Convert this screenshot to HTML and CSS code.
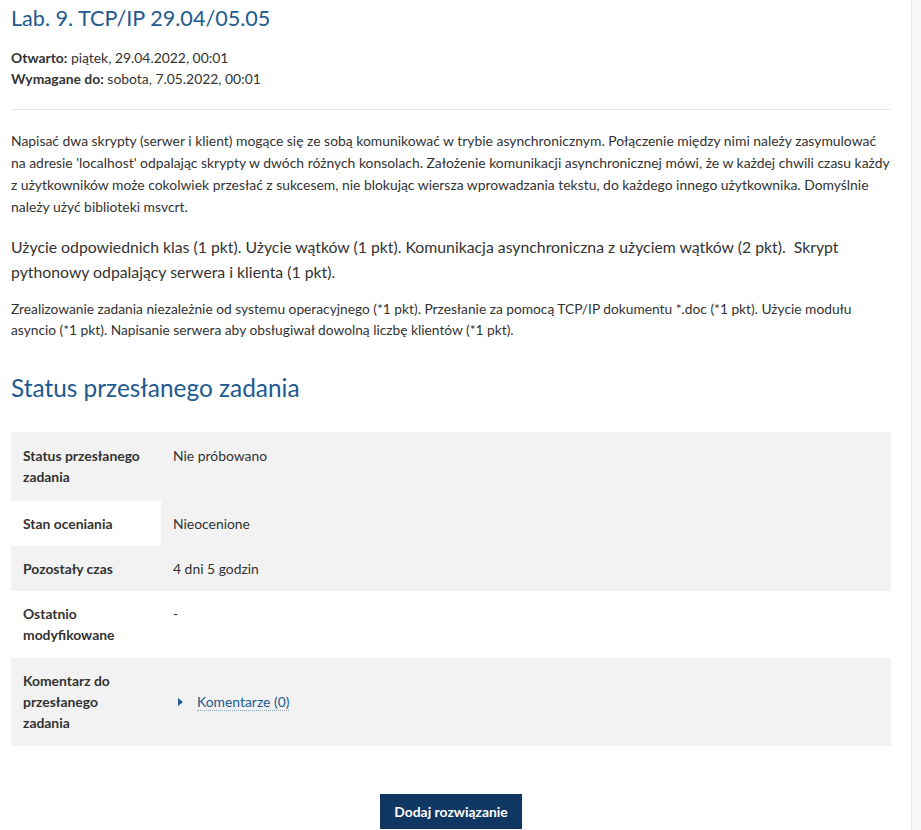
FILE: index.html
```html
<!DOCTYPE html>
<html lang="pl">
<head>
<meta charset="utf-8">
<title>Lab. 9. TCP/IP 29.04/05.05</title>
<link rel="stylesheet" href="styles.css">
</head>
<body>
<div class="layout">
  <main class="main">
    <h1 class="title">Lab. 9. TCP/IP 29.04/05.05</h1>
    <div class="dates">
      <div><strong>Otwarto:</strong> piątek, 29.04.2022, 00:01</div>
      <div><strong>Wymagane do:</strong> sobota, 7.05.2022, 00:01</div>
    </div>
    <hr class="sep">
    <p class="p1">Napisać dwa skrypty (serwer i klient) mogące się ze sobą komunikować w trybie asynchronicznym. Połączenie między nimi należy zasymulować na adresie 'localhost' odpalając skrypty w dwóch różnych konsolach. Założenie komunikacji asynchronicznej mówi, że w każdej chwili czasu każdy z użytkowników może cokolwiek przesłać z sukcesem, nie blokując wiersza wprowadzania tekstu, do każdego innego użytkownika. Domyślnie należy użyć biblioteki msvcrt.</p>
    <p class="p2">Użycie odpowiednich klas (1 pkt). Użycie wątków (1 pkt). Komunikacja asynchroniczna z użyciem wątków (2 pkt).&nbsp; Skrypt pythonowy odpalający serwera i klienta (1 pkt).</p>
    <p class="p3">Zrealizowanie zadania niezależnie od systemu operacyjnego (*1 pkt). Przesłanie za pomocą TCP/IP dokumentu *.doc (*1 pkt). Użycie modułu asyncio (*1 pkt). Napisanie serwera aby obsługiwał dowolną liczbę klientów (*1 pkt).</p>
    <h2 class="section">Status przesłanego zadania</h2>
    <table class="status">
      <tbody>
        <tr class="odd">
          <th>Status przesłanego zadania</th>
          <td>Nie próbowano</td>
        </tr>
        <tr class="even">
          <th>Stan oceniania</th>
          <td class="notgraded">Nieocenione</td>
        </tr>
        <tr class="odd">
          <th>Pozostały czas</th>
          <td>4 dni 5 godzin</td>
        </tr>
        <tr class="even">
          <th>Ostatnio modyfikowane</th>
          <td>-</td>
        </tr>
        <tr class="odd">
          <th>Komentarz do przesłanego zadania</th>
          <td class="comments"><span class="caret"></span><a href="#" class="clink">Komentarze (0)</a></td>
        </tr>
      </tbody>
    </table>
    <div class="actions">
      <button class="btn" type="button">Dodaj rozwiązanie</button>
    </div>
  </main>
  <aside class="side"></aside>
</div>
</body>
</html>
```
FILE: styles.css
```css
html, body {
  margin: 0;
  padding: 0;
  background: #fff;
}
body {
  font-family: Lato, "Open Sans", "Liberation Sans", sans-serif;
  color: #333;
  font-size: 14px;
  line-height: 21px;
  height: 830px;
  overflow: hidden;
}
.layout {
  display: flex;
  height: 830px;
}
.main {
  width: 880px;
  padding-left: 11px;
  padding-right: 20px;
  flex: none;
}
.side {
  flex: 1;
  background: #f8f8f8;
  border-left: 1px solid #e8e8e8;
}
.title {
  margin: 5px 0 0;
  font-size: 21.6px;
  line-height: 26px;
  font-weight: 400;
  color: #215a8f;
}
.dates {
  margin-top: 16px;
  font-size: 13.9px;
}
.dates strong { font-weight: 700; }
.sep {
  border: 0;
  border-top: 1px solid #e6e6e6;
  margin: 20px 0 0;
  height: 0;
}
.p1 {
  margin: 20px 0 0;
  font-size: 13.9px;
  line-height: 22px;
}
.p2 {
  margin: 16px 0 0;
  font-size: 15.8px;
  line-height: 25px;
}
.p3 {
  margin: 14px 0 0;
  font-size: 13.75px;
  line-height: 21px;
}
.section {
  margin: 33px 0 0;
  font-size: 24.4px;
  line-height: 29px;
  font-weight: 400;
  color: #215a8f;
}
.status {
  margin-top: 30px;
  width: 880px;
  border-collapse: collapse;
  font-size: 13.9px;
  line-height: 21.3px;
}
.status th, .status td {
  padding: 12px;
  text-align: left;
  vertical-align: top;
}
.status th {
  width: 120px;
  padding-right: 18px;
  font-weight: 700;
}
.status tr.odd { background: #f2f2f2; }
.status tr.even { background: #fff; }
.status tr.odd:first-child th,
.status tr.odd:first-child td { padding-top: 13px; padding-bottom: 13px; }
.status td.notgraded { background: #f2f2f2; }
.status td.comments { vertical-align: middle; }
.caret {
  display: inline-block;
  width: 0;
  height: 0;
  border-top: 4px solid transparent;
  border-bottom: 4px solid transparent;
  border-left: 5px solid #215a8f;
  margin: 0 14px 0 5px;
  vertical-align: 1px;
}
.clink {
  color: #215a8f;
  text-decoration: none;
  border-bottom: 1px dotted #8aa6c4;
}
.actions {
  margin-top: 48px;
  display: flex;
  justify-content: center;
}
.btn {
  font-family: inherit;
  font-size: 13.9px;
  font-weight: 700;
  color: #fff;
  background: #0f3761;
  border: 0;
  padding: 8px 14px;
  line-height: 19px;
}
```
